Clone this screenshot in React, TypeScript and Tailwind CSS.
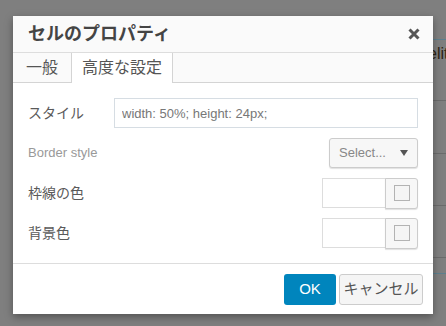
import React from 'react';

const font = "font-['Liberation_Sans','Noto_Sans_CJK_JP',sans-serif]";

const ColorPicker: React.FC = () => (
  <div className="flex">
    <div className="w-[64px] h-[30px] border border-[#dddddd] bg-white" />
    <button
      type="button"
      className="w-[33px] h-[31px] -ml-px flex items-center justify-center rounded-r-[3px] border border-[#cccccc] bg-[#f7f7f7] shadow-[0_1px_1px_rgba(0,0,0,0.12)]"
    >
      <span className="block w-[16px] h-[16px] border border-[#b3b3b3] bg-[#f5f5f5]" />
    </button>
  </div>
);

const App: React.FC = () => {
  return (
    <div className={`flex w-[446px] h-[326px] overflow-hidden bg-[#7f7f7f] ${font}`}>
      <div className="w-[13px] shrink-0" />

      <div className="relative z-10 mt-[16px] flex h-[298px] w-[420px] shrink-0 flex-col bg-white shadow-[0_3px_8px_rgba(0,0,0,0.35)]">
        {/* header */}
        <div className="flex h-[37px] items-center justify-between border-b border-[#dddddd] bg-[#fafafa] pl-[15px] pr-[13px]">
          <h2 className="text-[18px] font-bold leading-none text-[#444444]">セルのプロパティ</h2>
          <svg width="12" height="12" viewBox="0 0 12 12" className="text-[#555555]">
            <path d="M1.5 1.5 L10.5 10.5 M10.5 1.5 L1.5 10.5" stroke="currentColor" strokeWidth="3" />
          </svg>
        </div>

        {/* tabs */}
        <div className="flex h-[30px] bg-[#fafafa] text-[16px] text-[#555555]">
          <div className="flex w-[59px] items-center justify-center border-b border-r border-[#d4d4d4]">一般</div>
          <div className="flex w-[101px] items-center justify-center border-r border-[#d4d4d4] bg-white">高度な設定</div>
          <div className="flex-1 border-b border-[#d4d4d4]" />
        </div>

        {/* body */}
        <div className="flex h-[180px] flex-col gap-[10px] px-[15px] pt-[15px] text-[14px] text-[#5a5a5a]">
          <div className="flex h-[30px] items-center justify-between">
            <span>スタイル</span>
            <input
              readOnly
              defaultValue="width: 50%; height: 24px;"
              className="h-[30px] w-[304px] border border-[#d6dde3] bg-white pl-[7px] text-[13px] text-[#777777] outline-none"
            />
          </div>
          <div className="flex h-[30px] items-center justify-between">
            <span className="text-[13px] text-[#999999]">Border style</span>
            <button
              type="button"
              className="flex h-[30px] w-[89px] items-center justify-between rounded-[3px] border border-[#cccccc] bg-[#f7f7f7] pl-[9px] pr-[9px] text-[13px] text-[#888888] shadow-[0_1px_1px_rgba(0,0,0,0.12)]"
            >
              <span>Select...</span>
              <svg width="8" height="6" viewBox="0 0 8 6">
                <path d="M0 0 H8 L4 6 Z" fill="#555555" />
              </svg>
            </button>
          </div>
          <div className="flex h-[30px] items-center justify-between">
            <span>枠線の色</span>
            <ColorPicker />
          </div>
          <div className="flex h-[30px] items-center justify-between">
            <span>背景色</span>
            <ColorPicker />
          </div>
        </div>

        {/* footer */}
        <div className="flex h-[51px] items-center justify-end gap-[3px] border-t border-[#dddddd] pr-[10px] pt-[1px]">
          <button type="button" className="h-[31px] w-[52px] rounded-[3px] bg-[#0085bd] text-[15px] text-white">
            OK
          </button>
          <button
            type="button"
            className="h-[31px] w-[84px] rounded-[3px] border border-[#cccccc] bg-[#f5f5f5] text-[15px] text-[#555555]"
          >
            キャンセル
          </button>
        </div>
      </div>

      {/* page behind the overlay */}
      <div className="flex flex-1 flex-col overflow-hidden">
        <div className="h-[39px] shrink-0" />
        <div className="h-[61px] shrink-0 border-t border-[#5d7f8e] pt-[4px]">
          <span className="-ml-[5px] block whitespace-nowrap text-[16px] leading-[20px] text-[#2e2416]">elit</span>
        </div>
        <div className="h-[53px] shrink-0 border-t border-[#6b6b6b]" />
        <div className="h-[52px] shrink-0 border-t border-[#6b6b6b]" />
        <div className="h-[52px] shrink-0 border-t border-[#6b6b6b]" />
        <div className="h-[16px] shrink-0 border-t border-[#6b6b6b]" />
        <div className="flex-1 border-t border-[#5d7f8e]" />
      </div>
    </div>
  );
};

export default App;
